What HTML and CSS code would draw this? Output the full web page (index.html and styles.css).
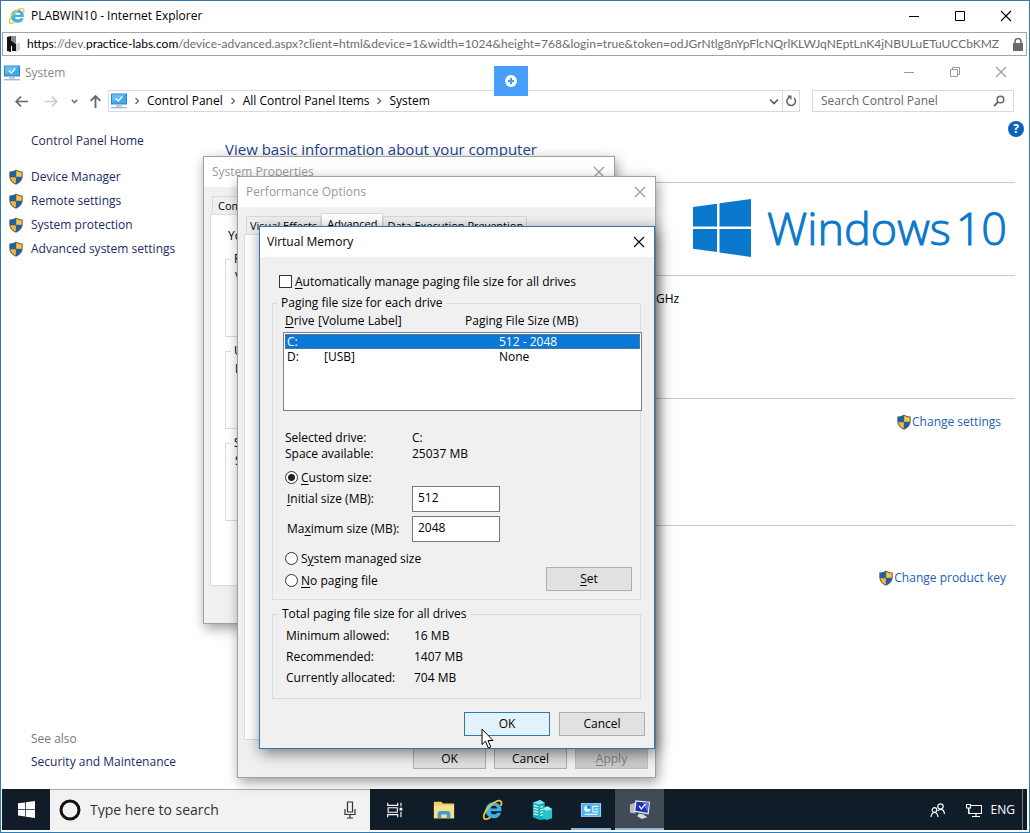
FILE: index.html
```
<!DOCTYPE html>
<html lang="en">
<head>
  <meta charset="UTF-8">
  <title>PLABWIN10 - Internet Explorer</title>
  <link rel="stylesheet" href="styles.css">
</head>
<body>

  <!-- shared icons -->
  <svg class="sprite" aria-hidden="true">
    <symbol id="shield" viewBox="0 0 16 16">
      <path d="M8 .5C6 2 3.500 2.500 1.300 2.500V7c0 4 2.700 7 6.700 8.700C12 14 14.700 11 14.700 7V2.500C12.500 2.500 10 2 8 .5z" fill="#5d5b50"/>
      <path d="M7.800 1.800C6 3 4.200 3.400 2.300 3.500v4.300h5.500z" fill="#1263b3"/>
      <path d="M8.200 1.800C10 3 11.800 3.400 13.700 3.500v4.300H8.200z" fill="#f5c34c"/>
      <path d="M2.400 8.200h5.400v6.300C4.800 13.300 2.700 11 2.400 8.200z" fill="#f0b83c"/>
      <path d="M13.600 8.200H8.200v6.300c3-1.200 5.100-3.500 5.400-6.300z" fill="#1263b3"/>
    </symbol>
    <symbol id="monitor" viewBox="0 0 16 16">
      <path d="M0 .5h16v11H0z" fill="#2d86c4"/>
      <path d="M1 1.500h14v9H1z" fill="#3fa9ee"/>
      <path d="M1 1.500h14L1 9z" fill="#63bdf5"/>
      <path d="M4.800 5.500l2.500 2.500 4-4.500" fill="none" stroke="#fff" stroke-width="1.500"/>
      <path d="M5 13h6M0 14.800h16" stroke="#7c9fb8" stroke-width="1"/>
    </symbol>
    <symbol id="close" viewBox="0 0 12 12">
      <path d="M1 1l10 10M11 1L1 11" fill="none" stroke="currentColor" stroke-width="1.100"/>
    </symbol>
    <symbol id="chevron" viewBox="0 0 6 8">
      <path d="M1.500 1l3 3-3 3" fill="none" stroke="#666" stroke-width="1.300"/>
    </symbol>
    <symbol id="flag" viewBox="0 0 58 58">
      <path d="M0 8l24-3.300V27.500H0zM26.500 4.300L58 0v27.500H26.500zM0 30h24v23L0 49.800zM26.500 30H58v28l-31.500-4.500z" fill="currentColor"/>
    </symbol>
    <symbol id="ie" viewBox="0 0 24 24">
      <path d="M12.500 3.500a8.500 8.500 0 0 1 8.700 9.800H9.300c.2 2 1.600 3.400 3.700 3.400 1.500 0 2.700-.6 3.400-1.700h4.400a8.600 8.600 0 0 1-8.300 6 8.700 8.700 0 0 1 0-17.500zM9.400 10.300h7.200c-.3-1.800-1.700-3-3.600-3s-3.300 1.200-3.600 3z" fill="#3db2e8"/>
      <path d="M20.500 7.500c1-2.400 1-4.400-.2-5.200-2.200-1.500-8 1.200-12.800 6.300S.6 19.700 2.700 21.500c1.300 1 3.700.4 6.300-1.300" fill="none" stroke="#f0c93a" stroke-width="1.900"/>
    </symbol>
  </svg>

  <div class="browser">
    <header class="titlebar">
      <svg class="ie-icon"><use href="#ie"/></svg>
      <h1>PLABWIN10 - Internet Explorer</h1>
      <div class="caption">
        <button type="button" aria-label="Minimize"><svg viewBox="0 0 12 12"><path d="M1 6.500h10" stroke="currentColor"/></svg></button>
        <button type="button" aria-label="Maximize"><svg viewBox="0 0 12 12"><path d="M1.500 1.500h9v9h-9z" fill="none" stroke="currentColor"/></svg></button>
        <button type="button" aria-label="Close"><svg><use href="#close"/></svg></button>
      </div>
    </header>

    <div class="address">
      <svg class="site-icon" viewBox="0 0 14 16">
        <path d="M5 2l4-2v8l4-2v8l-4 2-4-2z" fill="#d3d3d3"/>
        <path d="M0 1l4-1v4l5 4v7H5v-5l-1-.500V16l-4-1z" fill="#111"/>
        <path d="M4 0h5v8L4 4.500z" fill="#8b8b8b"/>
      </svg>
      <div class="url" role="textbox" aria-label="Address"><b>https</b>://dev.<b>practice-labs.com</b>/device-advanced.aspx?client=html&amp;device=1&amp;width=1024&amp;height=768&amp;login=true&amp;token=odJGrNtlg8nYpFlcNQrlKLWJqNEptLnK4jNBULuETuUCCbKMZ</div>
      <svg class="lock" viewBox="0 0 10 13"><path d="M0 5h10v8H0z" fill="#6a6a6a"/><path d="M2 6V3.500a3 3 0 0 1 6 0V6" fill="none" stroke="#6a6a6a" stroke-width="1.600"/></svg>
    </div>

    <div class="desktop">
      <button type="button" class="session-menu" aria-label="Session menu">
        <svg viewBox="0 0 12 12"><circle cx="6" cy="6" r="6" fill="#fff"/><path d="M6 3v6M3 6h6" stroke="#3f9bfa" stroke-width="2"/></svg>
      </button>

      <section class="system">
        <div class="system-title">
          <svg class="icon"><use href="#monitor"/></svg>
          <span>System</span>
          <div class="caption inactive">
            <button type="button" aria-label="Minimize"><svg viewBox="0 0 12 12"><path d="M1 6.500h10" stroke="currentColor"/></svg></button>
            <button type="button" aria-label="Restore"><svg viewBox="0 0 12 12"><path d="M1.500 3.500h7v7h-7zM3.500 3.500v-2h7v7h-2" fill="none" stroke="currentColor"/></svg></button>
            <button type="button" aria-label="Close"><svg><use href="#close"/></svg></button>
          </div>
        </div>

        <nav class="toolbar">
          <button type="button" class="tool" aria-label="Back"><svg viewBox="0 0 12 12"><path d="M12 6H1M5.500 1.500L1 6l4.500 4.500" fill="none" stroke="#666" stroke-width="1.500"/></svg></button>
          <button type="button" class="tool" aria-label="Forward"><svg viewBox="0 0 12 12"><path d="M0 6h11M6.500 1.500L11 6l-4.500 4.500" fill="none" stroke="#ccc" stroke-width="1.500"/></svg></button>
          <button type="button" class="tool narrow" aria-label="Recent"><svg viewBox="0 0 12 12"><path d="M3.500 4.500L6 7l2.500-2.500" fill="none" stroke="#777" stroke-width="1.500"/></svg></button>
          <button type="button" class="tool up" aria-label="Up"><svg viewBox="0 0 12 12"><path d="M6 12V1M1.500 5.500L6 1l4.500 4.500" fill="none" stroke="#666" stroke-width="1.700"/></svg></button>
          <div class="crumbs">
            <svg class="icon"><use href="#monitor"/></svg>
            <svg class="chevron"><use href="#chevron"/></svg>
            <a href="#">Control Panel</a>
            <svg class="chevron"><use href="#chevron"/></svg>
            <a href="#">All Control Panel Items</a>
            <svg class="chevron"><use href="#chevron"/></svg>
            <a href="#">System</a>
            <button type="button" class="crumb-btn first" aria-label="Previous locations"><svg viewBox="0 0 12 12"><path d="M2 4.500l4 4 4-4" fill="none" stroke="#555" stroke-width="1.600"/></svg></button>
            <button type="button" class="crumb-btn" aria-label="Refresh"><svg viewBox="0 0 12 12"><path d="M9 3A4.300 4.300 0 1 1 4 2.500" fill="none" stroke="#666" stroke-width="1.600"/><path d="M2 .5h4.500V5z" fill="#666"/></svg></button>
          </div>
          <div class="search">
            <input type="text" placeholder="Search Control Panel" aria-label="Search Control Panel">
            <svg viewBox="0 0 12 12"><circle cx="7.500" cy="4.500" r="3.300" fill="none" stroke="#666" stroke-width="1.500"/><path d="M5 7L1 11" stroke="#666" stroke-width="1.800"/></svg>
          </div>
        </nav>

        <div class="system-body">
          <button type="button" class="help" aria-label="Help">?</button>
          <aside class="sidebar">
            <a href="#">Control Panel Home</a>
            <ul>
              <li><svg class="icon"><use href="#shield"/></svg><a href="#">Device Manager</a></li>
              <li><svg class="icon"><use href="#shield"/></svg><a href="#">Remote settings</a></li>
              <li><svg class="icon"><use href="#shield"/></svg><a href="#">System protection</a></li>
              <li><svg class="icon"><use href="#shield"/></svg><a href="#">Advanced system settings</a></li>
            </ul>
            <div class="see-also">
              <p>See also</p>
              <a href="#">Security and Maintenance</a>
            </div>
          </aside>

          <main class="info">
            <h2>View basic information about your computer</h2>
            <div class="row edition">
              <svg class="win-flag"><use href="#flag"/></svg>
              <div class="wordmark"><span>Windows</span> <span>10</span></div>
            </div>
            <div class="row specs"><p>GHz</p></div>
            <div class="row name"><svg class="icon"><use href="#shield"/></svg><a href="#">Change settings</a></div>
            <div class="row activation"><svg class="icon"><use href="#shield"/></svg><a href="#">Change product key</a></div>
          </main>
        </div>
      </section>

      <section class="window properties">
        <div class="window-title"><h3>System Properties</h3><button type="button" aria-label="Close"><svg><use href="#close"/></svg></button></div>
        <div class="tabs"><button type="button" class="tab">Computer</button></div>
        <div class="panel">
          <p>You</p>
          <fieldset><legend>Performance</legend>Visual</fieldset>
          <fieldset><legend>User</legend>Desktop</fieldset>
          <fieldset><legend>Startup</legend>System</fieldset>
        </div>
      </section>

      <section class="window performance">
        <div class="window-title"><h3>Performance Options</h3><button type="button" aria-label="Close"><svg><use href="#close"/></svg></button></div>
        <div class="tabs">
          <button type="button" class="tab">Visual Effects</button>
          <button type="button" class="tab active">Advanced</button>
          <button type="button" class="tab">Data Execution Prevention</button>
        </div>
        <div class="panel"></div>
        <div class="actions">
          <button type="button" class="btn">OK</button>
          <button type="button" class="btn">Cancel</button>
          <button type="button" class="btn" disabled><u>A</u>pply</button>
        </div>
      </section>

      <form class="window memory">
        <div class="window-title"><h3>Virtual Memory</h3><button type="button" aria-label="Close"><svg><use href="#close"/></svg></button></div>
        <div class="memory-body">
          <div class="check auto">
            <input type="checkbox" id="auto">
            <label for="auto"><u>A</u>utomatically manage paging file size for all drives</label>
          </div>

          <fieldset class="drives">
            <legend>Paging file size for each drive</legend>
            <div class="list-head">
              <span><u>D</u>rive</span>
              <span>[Volume Label]</span>
              <span>Paging File Size (MB)</span>
            </div>
            <div class="listbox">
              <table>
                <tr class="selected"><td>C:</td><td></td><td>512 - 2048</td></tr>
                <tr><td>D:</td><td>[USB]</td><td>None</td></tr>
              </table>
            </div>
            <dl class="drive-info">
              <dt>Selected drive:</dt><dd>C:</dd>
              <dt>Space available:</dt><dd>25037 MB</dd>
            </dl>
            <div class="check">
              <input type="radio" name="size" id="custom" checked>
              <label for="custom"><u>C</u>ustom size:</label>
            </div>
            <div class="field">
              <label for="initial"><u>I</u>nitial size (MB):</label>
              <input type="text" id="initial" value="512">
            </div>
            <div class="field">
              <label for="maximum">Ma<u>x</u>imum size (MB):</label>
              <input type="text" id="maximum" value="2048">
            </div>
            <div class="size-options">
              <div class="choices">
                <div class="check">
                  <input type="radio" name="size" id="managed">
                  <label for="managed">S<u>y</u>stem managed size</label>
                </div>
                <div class="check">
                  <input type="radio" name="size" id="none">
                  <label for="none"><u>N</u>o paging file</label>
                </div>
              </div>
              <button type="button" class="btn"><u>S</u>et</button>
            </div>
          </fieldset>

          <fieldset class="totals">
            <legend>Total paging file size for all drives</legend>
            <dl>
              <dt>Minimum allowed:</dt><dd>16 MB</dd>
              <dt>Recommended:</dt><dd>1407 MB</dd>
              <dt>Currently allocated:</dt><dd>704 MB</dd>
            </dl>
          </fieldset>

          <div class="actions">
            <button type="button" class="btn default">OK</button>
            <button type="button" class="btn">Cancel</button>
          </div>
        </div>
      </form>

      <svg class="cursor" viewBox="0 0 13 21"><path d="M1 1v15.500l3.500-3.300L7.300 20l2.500-1-2.800-6.500H12z" fill="#fff" stroke="#000" stroke-width="1"/></svg>

      <footer class="taskbar">
        <button type="button" class="start" aria-label="Start"><svg><use href="#flag"/></svg></button>
        <div class="task-search">
          <svg class="cortana" viewBox="0 0 22 22"><circle cx="11" cy="11" r="9" fill="none" stroke="#111" stroke-width="3"/></svg>
          <input type="text" placeholder="Type here to search" aria-label="Type here to search">
          <svg class="mic" viewBox="0 0 12 18"><path d="M3.500 1h5v10h-5zM1 8v5.500h10V8M6 13.500V17M3 17h6" fill="none" stroke="#333" stroke-width="1.200"/></svg>
        </div>
        <button type="button" class="task" aria-label="Task View">
          <svg viewBox="0 0 24 24"><path d="M4 4v3h11V4M4 20v-3h11v3M4.500 9.500h10v5h-10zM18.500 4v4M18.500 14v6" fill="none" stroke="#fff" stroke-width="1.200"/><path d="M17 9.500h3v3h-3z" fill="#fff"/></svg>
        </button>
        <button type="button" class="task" aria-label="File Explorer">
          <svg viewBox="0 0 24 24"><path d="M1 3h8l2 2h12v16H1z" fill="#f0cb62"/><path d="M1 7h22v14H1z" fill="#fce08d"/><path d="M5 21v-6l2-2h10l2 2v6h-4v-4H9v4z" fill="#3e9fd0"/></svg>
        </button>
        <button type="button" class="task" aria-label="Internet Explorer"><svg><use href="#ie"/></svg></button>
        <button type="button" class="task" aria-label="Server Manager">
          <svg viewBox="0 0 24 24"><path d="M2 4l8-3 5 3v18l-5 1-8-3z" fill="#17aebb"/><path d="M2 4l8-3 5 3-6 2z" fill="#7fe3e8"/><path d="M13 10l5-2 5 3v10l-6 2-4-2z" fill="#27c4cb"/><path d="M13 10l5-2 5 3-6 2z" fill="#a4eef0"/><path d="M3 7l5 1.500M3 10l5 1.500M3 13l5 1.500M3 16l5 1.500M10 9l3-1M10 12l3-1M10 15l3-1M10 18l3-1" stroke="#d9ffff" stroke-width="1.300"/></svg>
        </button>
        <button type="button" class="task open" aria-label="Control Panel">
          <svg viewBox="0 0 24 24"><path d="M1 4.500h22v15H1z" fill="#9bd7f8"/><path d="M2 5.500h20v13H2z" fill="#4fb3ec"/><circle cx="8" cy="10.500" r="3.500" fill="#e5f6ff"/><path d="M8 10.500V7a3.500 3.500 0 0 1 3.500 3.500z" fill="#1b6fae"/><path d="M14 7.500v7M14 8h6M16 11h4M14 14h6M5 16.800h14" stroke="#e5f6ff" stroke-width="1.200"/></svg>
        </button>
        <button type="button" class="task current" aria-label="System">
          <svg viewBox="0 0 24 24"><path d="M1 7l6-2v12l-6-1z" fill="#b9bcc0"/><path d="M7 2.500L23 4l-1.500 14L5.500 15z" fill="#e6e8ec"/><path d="M8.200 4l13.300 1.200-1.200 11L7 13.800z" fill="#1b2fb8"/><path d="M15 4.600l6.500.6-1.200 11z" fill="#5870e0"/><path d="M11 8.500l2.500 3.500L18 6.500" fill="none" stroke="#fff" stroke-width="1.400"/><path d="M11 17l5 1 4 3-6 2-5-3z" fill="#d7dade"/></svg>
        </button>
        <div class="tray">
          <svg class="people" viewBox="0 0 16 16"><circle cx="10.500" cy="4.500" r="2.700" fill="none" stroke="#fff" stroke-width="1.200"/><circle cx="4.500" cy="8" r="2.300" fill="none" stroke="#fff" stroke-width="1.200"/><path d="M1 15c.3-2.800 1.500-4.500 3.500-4.500S7.700 12 8 15M8 9c.7-1 1.500-1.600 2.500-1.600 2.300 0 3.700 1.600 4 4.600" fill="none" stroke="#fff" stroke-width="1.200"/></svg>
          <svg class="network" viewBox="0 0 16 16"><path d="M5 3.500h10.500v8H5M3 6.500v5h3M10 11.500v3M6 14.500h8M.5 2.500h4v3.500h-4zM2.500 6v5.500" fill="none" stroke="#fff" stroke-width="1.100"/></svg>
          <span>ENG</span>
        </div>
      </footer>
    </div>
  </div>

</body>
</html>
```
FILE: styles.css
```
* {
  box-sizing: border-box;
}

body {
  margin: 0;
  font-family: "Open Sans", "Noto Sans", sans-serif;
  font-size: 12px;
  line-height: 16px;
  color: #000;
}

h1, h2, h3, p, ul, dl, dd, fieldset {
  margin: 0;
  padding: 0;
}

h1, h3 {
  font-size: 12px;
  font-weight: normal;
}

button, input {
  font: inherit;
  color: inherit;
}

button {
  padding: 0;
  border: none;
  background: none;
}

svg {
  flex: none;
  display: block;
}

a {
  text-decoration: none;
}

u {
  text-underline-offset: 2px;
}

.sprite {
  position: absolute;
  width: 0;
  height: 0;
}

.icon {
  width: 16px;
  height: 16px;
}

/* browser window */

.browser {
  display: flex;
  flex-direction: column;
  min-height: 100vh;
  border: 1px solid #2f7ab0;
  background-color: #fff;
}

.titlebar {
  display: flex;
  align-items: center;
  height: 31px;
  padding: 0 0 2px 7px;
}

.titlebar h1 {
  margin-left: 5px;
}

.ie-icon {
  width: 18px;
  height: 18px;
}

.caption {
  display: flex;
  margin-left: auto;
}

.caption button {
  display: flex;
  justify-content: center;
  width: 46px;
}

.caption svg,
.window-title svg {
  width: 12px;
  height: 12px;
}

.inactive {
  padding: 0 3px 2px 0;
  color: #999;
}

.address {
  display: flex;
  align-items: center;
  height: 24px;
  margin: 0 2px 0 1px;
  padding: 0 3px 0 4px;
  border: 1px solid #a5a5a5;
}

.site-icon {
  width: 14px;
  height: 16px;
}

.url {
  flex: 1;
  min-width: 0;
  margin: 0 5px 0 6px;
  overflow: hidden;
  white-space: nowrap;
  font-family: Lato, "Open Sans", sans-serif;
  color: #6d6d6d;
}

.url b {
  font-weight: normal;
  color: #000;
}

.lock {
  width: 10px;
  height: 13px;
}

/* remote desktop */

.desktop {
  position: relative;
  flex: 1;
  display: flex;
  flex-direction: column;
  padding: 0 2px 2px 1px;
}

.session-menu {
  position: absolute;
  z-index: 1;
  top: 10px;
  left: calc(50% - 21px);
  display: flex;
  align-items: center;
  justify-content: center;
  width: 34px;
  height: 30px;
  background-color: #469ffc;
}

.session-menu svg {
  width: 12px;
  height: 12px;
}

.system {
  flex: 1;
  display: flex;
  flex-direction: column;
}

.system-title {
  display: flex;
  align-items: center;
  height: 34px;
  padding-left: 2px;
  color: #888;
}

.system-title > span {
  margin-left: 5px;
}

.toolbar {
  display: flex;
  align-items: center;
  height: 22px;
  padding: 0 13px 0 4px;
}

.tool {
  display: flex;
  justify-content: center;
  width: 30px;
}

.tool svg {
  width: 13px;
  height: 13px;
}

.narrow {
  width: 16px;
}

.up {
  width: 26px;
}

.crumbs {
  flex: 1;
  display: flex;
  align-items: center;
  height: 22px;
  padding-left: 2px;
  border: 1px solid #d9d9d9;
}

.crumbs a {
  color: #000;
}

.chevron {
  width: 6px;
  height: 8px;
  margin: 0 7px;
}

.crumb-btn {
  display: flex;
  align-items: center;
  justify-content: center;
  width: 17px;
  height: 20px;
  border-left: 1px solid #d9d9d9;
}

.crumb-btn.first {
  margin-left: auto;
  border: none;
}

.crumb-btn svg {
  width: 12px;
  height: 12px;
}

.search {
  display: flex;
  align-items: center;
  width: 202px;
  height: 22px;
  margin-left: 12px;
  padding: 0 8px;
  border: 1px solid #d9d9d9;
}

.search input {
  flex: 1;
  min-width: 0;
  padding: 0;
  border: none;
}

.search svg {
  width: 12px;
  height: 12px;
}

.search input::placeholder {
  color: #666;
}

.system-body {
  position: relative;
  flex: 1;
  display: flex;
}

.help {
  position: absolute;
  top: 9px;
  right: 3px;
  width: 16px;
  height: 16px;
  border-radius: 8px;
  background-color: #0b62b8;
  color: #fff;
  font-weight: bold;
}

.sidebar {
  display: flex;
  flex-direction: column;
  width: 223px;
  padding: 21px 0 19px 29px;
}

.sidebar a {
  color: #1b2a66;
}

.sidebar ul {
  margin: 16px 0 0 -23px;
  list-style: none;
}

.sidebar li {
  display: flex;
  align-items: center;
  gap: 7px;
  height: 24px;
}

.see-also {
  margin-top: auto;
}

.see-also p {
  margin-bottom: 7px;
  color: #777;
}

.info {
  flex: 1;
  padding: 26px 12px 0 0;
}

.info h2 {
  height: 44px;
  font-size: 15px;
  font-weight: normal;
  line-height: 22px;
  color: #1c3f8f;
}

.row {
  display: flex;
  justify-content: flex-end;
  border-top: 1px solid #c8c8c8;
}

.row a {
  color: #1c62b4;
}

.edition {
  align-items: center;
  gap: 16px;
  height: 93px;
  padding: 0 8px 2px 0;
  color: #0a78cc;
}

.win-flag {
  width: 58px;
  height: 58px;
}

.wordmark {
  display: flex;
  gap: 5px;
  font-size: 45px;
  font-weight: 300;
  line-height: 60px;
  -webkit-text-stroke: 1px #0a78cc;
}

.specs {
  justify-content: flex-start;
  height: 123px;
  padding: 15px 0 0 431px;
}

.name {
  height: 127px;
  padding: 15px 14px 0 0;
}

.activation {
  padding: 44px 9px 0 0;
}

/* dialogs */

.window {
  position: absolute;
  display: flex;
  flex-direction: column;
  border: 1px solid #a0a0a0;
  background-color: #f0f0f0;
  box-shadow: 2px 4px 12px rgba(0, 0, 0, 0.4);
}

.window-title {
  display: flex;
  align-items: center;
  justify-content: space-between;
  height: 30px;
  padding: 0 9px 0 8px;
  background-color: #fff;
  color: #999;
}

.tabs {
  display: flex;
  align-items: flex-end;
  height: 27px;
  padding-left: 8px;
}

.tab {
  height: 18px;
  padding: 0 3px;
  border: 1px solid #d9d9d9;
  border-bottom: none;
  background-color: #f0f0f0;
  font-size: 11px;
  white-space: nowrap;
}

.tab.active {
  height: 21px;
  padding: 0 5px;
  background-color: #fff;
}

.panel {
  flex: 1;
  margin: 0 6px;
  border: 1px solid #dcdcdc;
  background-color: #fff;
}

fieldset {
  min-width: 0;
  border: 1px solid #dcdcdc;
}

legend {
  padding: 0 3px;
}

.btn {
  width: 86px;
  height: 24px;
  border: 1px solid #adadad;
  background-color: #e1e1e1;
}

.btn:disabled {
  border-color: #bfbfbf;
  background-color: #ccc;
  color: #838383;
}

.btn.default {
  border-color: #2a7ab0;
  background-color: #e3f1fb;
}

.actions {
  display: flex;
  justify-content: flex-end;
}

.properties {
  top: 100px;
  left: 202px;
  width: 412px;
  height: 468px;
}

.properties .tab {
  padding: 0 5px;
}

.properties .panel {
  margin-bottom: 37px;
  padding: 13px 14px;
}

.properties p {
  margin: 0 0 7px 3px;
}

.properties fieldset {
  height: 86px;
  margin-bottom: 6px;
  padding: 2px 9px;
}

.properties legend {
  margin-left: -4px;
}

.performance {
  top: 120px;
  left: 236px;
  width: 419px;
  height: 602px;
}

.performance .actions {
  gap: 8px;
  padding: 5px 7px 8px;
}

.performance .btn {
  width: 73px;
  padding-top: 3px;
}

.memory {
  top: 170px;
  left: 258px;
  width: 396px;
  border-color: #2a78b5;
  box-shadow: 2px 4px 14px rgba(0, 0, 0, 0.5);
}

.memory .window-title {
  padding-left: 7px;
  color: #000;
}

.memory-body {
  padding: 18px 9px 12px 12px;
}

.memory fieldset {
  margin-right: 4px;
}

.memory legend {
  margin-left: -7px;
}

.check {
  display: flex;
  align-items: center;
  height: 13px;
  gap: 3px;
}

.check input {
  appearance: none;
  width: 13px;
  height: 13px;
  margin: 0;
  border: 1px solid #333;
  background-color: #fff;
}

.check input[type="radio"] {
  border-radius: 50%;
}

.check input[type="radio"]:checked {
  background: radial-gradient(circle, #222 3px, #fff 4px);
}

.auto {
  margin: 0 0 7px 7px;
}

.drives {
  padding: 0 8px 8px 12px;
}

.list-head {
  display: grid;
  grid-template-columns: 33px 147px 1fr;
  margin-top: 2px;
}

.listbox {
  height: 79px;
  margin: 3px -10px 0 -2px;
  padding: 1px;
  border: 1px solid #7f7f7f;
  background-color: #fff;
}

.listbox table {
  width: 100%;
  border-collapse: collapse;
}

.listbox td {
  height: 15px;
  padding: 0 0 0 2px;
  line-height: 15px;
}

.listbox td:first-child {
  width: 37px;
}

.listbox td:last-child {
  width: 143px;
}

.selected {
  background-color: #0a78d7;
  color: #fff;
  outline: 1px dotted #8a7a66;
  outline-offset: -1px;
}

.memory dl {
  display: grid;
  grid-template-columns: 127px 1fr;
}

.drive-info {
  margin: 19px 0 9px;
}

.field {
  display: flex;
  align-items: center;
  height: 30px;
  padding-left: 2px;
}

.field label {
  width: 125px;
}

.field input {
  width: 88px;
  height: 26px;
  padding: 0 5px 3px;
  border: 1px solid #7a7a7a;
}

.size-options {
  display: flex;
  align-items: flex-end;
  justify-content: space-between;
  margin-top: 8px;
}

.choices {
  display: grid;
  row-gap: 9px;
  padding-bottom: 4px;
}

.totals {
  margin-top: 6px;
  padding: 6px 12px 12px 13px;
}

.totals dl {
  grid-template-columns: 128px 1fr;
  row-gap: 5px;
}

.memory .actions {
  gap: 9px;
  margin-top: 13px;
}

.cursor {
  position: absolute;
  top: 672px;
  left: 480px;
  width: 13px;
  height: 21px;
}

/* taskbar */

.taskbar {
  display: flex;
  height: 41px;
  background-color: #111c29;
  color: #fff;
}

.start,
.task {
  display: flex;
  align-items: center;
  justify-content: center;
  width: 48px;
}

.start svg {
  width: 17px;
  height: 17px;
}

.task {
  width: 49px;
}

.task svg {
  width: 22px;
  height: 22px;
}

.task.open {
  background: linear-gradient(#8ab8e0, #8ab8e0) center bottom / 40px 2px no-repeat;
}

.task.current {
  border-bottom: 2px solid #8ab8e0;
  background-color: #414a55;
}

.task-search {
  display: flex;
  align-items: center;
  width: 320px;
  padding: 0 14px 0 9px;
  border-top: 1px solid #aaa;
  background-color: #f2f2f2;
}

.cortana {
  width: 22px;
  height: 22px;
}

.task-search input {
  flex: 1;
  min-width: 0;
  margin-left: 9px;
  padding: 0;
  border: none;
  background: none;
  font-size: 14px;
}

.task-search input::placeholder {
  color: #333;
}

.mic {
  width: 12px;
  height: 18px;
}

.tray {
  display: flex;
  align-items: center;
  margin: 0 4px 0 auto;
  padding-right: 7px;
  border-right: 1px solid #7b828a;
}

.tray svg {
  width: 16px;
  height: 16px;
}

.tray .network {
  margin: 0 9px 0 20px;
}
```
